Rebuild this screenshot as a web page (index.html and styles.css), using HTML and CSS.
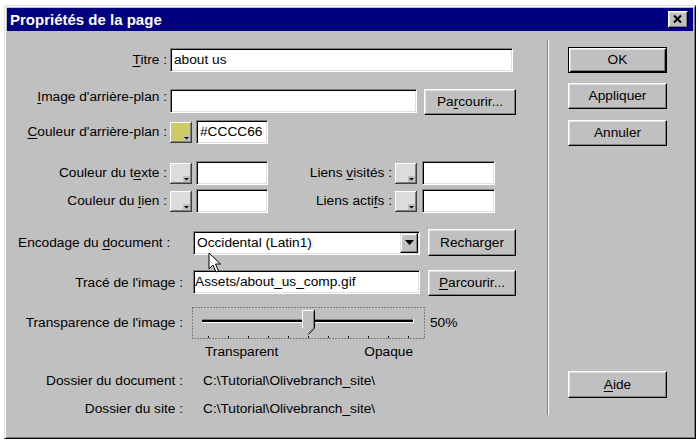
FILE: index.html
```html
<!DOCTYPE html>
<html lang="fr">
<head>
    <meta charset="UTF-8">
    <title>Propriétés de la page</title>
    <link rel="stylesheet" href="styles.css">
</head>
<body>
    <div class="window">
        <div class="titlebar">
            <span class="title">Propriétés de la page</span>
            <span class="close">
                <svg width="18" height="15" viewBox="0 0 18 15">
                    <path d="M5 3.5 L12 10.5 M12 3.5 L5 10.5" stroke="#000" stroke-width="2"/>
                </svg>
            </span>
        </div>
        <div class="dialog-body">
            <div class="form">
                <div class="row row-titre">
                    <span class="lbl lbl-a"><u>T</u>itre :</span>
                    <div class="field w-titre">about us</div>
                </div>
                <div class="row row-image">
                    <span class="lbl lbl-a"><u>I</u>mage d'arrière-plan :</span>
                    <div class="field w-image"></div>
                    <div class="btn btn-browse">Pa<u>r</u>courir...</div>
                </div>
                <div class="row row-bg">
                    <span class="lbl lbl-a"><u>C</u>ouleur d'arrière-plan :</span>
                    <svg class="swatch" width="22" height="21" viewBox="0 0 22 21">
                        <rect width="22" height="21" fill="#fff"/>
                        <rect x="21" width="1" height="21" fill="#404040"/>
                        <rect y="20" width="22" height="1" fill="#404040"/>
                        <rect x="1" y="1" width="19" height="18" fill="#cccc66"/>
                        <rect x="20" y="1" width="1" height="19" fill="#808080"/>
                        <rect x="1" y="19" width="20" height="1" fill="#808080"/>
                        <rect x="13" y="13" width="7" height="6" fill="#c0c0c0"/>
                        <path d="M14 15 H19 L16.5 17.5 Z" fill="#000"/>
                    </svg>
                    <div class="field w-color">#CCCC66</div>
                </div>
                <div class="row row-texte">
                    <span class="lbl lbl-a">Couleur du t<u>e</u>xte :</span>
                    <svg class="swatch" width="22" height="21" viewBox="0 0 22 21">
                        <rect width="22" height="21" fill="#fff"/>
                        <rect x="21" width="1" height="21" fill="#404040"/>
                        <rect y="20" width="22" height="1" fill="#404040"/>
                        <rect x="1" y="1" width="19" height="18" fill="#dcdcdc"/>
                        <rect x="20" y="1" width="1" height="19" fill="#808080"/>
                        <rect x="1" y="19" width="20" height="1" fill="#808080"/>
                        <rect x="13" y="13" width="7" height="6" fill="#c0c0c0"/>
                        <path d="M14 15 H19 L16.5 17.5 Z" fill="#000"/>
                    </svg>
                    <div class="field w-color"></div>
                    <span class="lbl lbl-c">Liens <u>v</u>isités :</span>
                    <svg class="swatch" width="22" height="21" viewBox="0 0 22 21">
                        <rect width="22" height="21" fill="#fff"/>
                        <rect x="21" width="1" height="21" fill="#404040"/>
                        <rect y="20" width="22" height="1" fill="#404040"/>
                        <rect x="1" y="1" width="19" height="18" fill="#dcdcdc"/>
                        <rect x="20" y="1" width="1" height="19" fill="#808080"/>
                        <rect x="1" y="19" width="20" height="1" fill="#808080"/>
                        <rect x="13" y="13" width="7" height="6" fill="#c0c0c0"/>
                        <path d="M14 15 H19 L16.5 17.5 Z" fill="#000"/>
                    </svg>
                    <div class="field w-color2"></div>
                </div>
                <div class="row row-lien">
                    <span class="lbl lbl-a">Couleur du <u>l</u>ien :</span>
                    <svg class="swatch" width="22" height="21" viewBox="0 0 22 21">
                        <rect width="22" height="21" fill="#fff"/>
                        <rect x="21" width="1" height="21" fill="#404040"/>
                        <rect y="20" width="22" height="1" fill="#404040"/>
                        <rect x="1" y="1" width="19" height="18" fill="#dcdcdc"/>
                        <rect x="20" y="1" width="1" height="19" fill="#808080"/>
                        <rect x="1" y="19" width="20" height="1" fill="#808080"/>
                        <rect x="13" y="13" width="7" height="6" fill="#c0c0c0"/>
                        <path d="M14 15 H19 L16.5 17.5 Z" fill="#000"/>
                    </svg>
                    <div class="field w-color"></div>
                    <span class="lbl lbl-c">Liens acti<u>f</u>s :</span>
                    <svg class="swatch" width="22" height="21" viewBox="0 0 22 21">
                        <rect width="22" height="21" fill="#fff"/>
                        <rect x="21" width="1" height="21" fill="#404040"/>
                        <rect y="20" width="22" height="1" fill="#404040"/>
                        <rect x="1" y="1" width="19" height="18" fill="#dcdcdc"/>
                        <rect x="20" y="1" width="1" height="19" fill="#808080"/>
                        <rect x="1" y="19" width="20" height="1" fill="#808080"/>
                        <rect x="13" y="13" width="7" height="6" fill="#c0c0c0"/>
                        <path d="M14 15 H19 L16.5 17.5 Z" fill="#000"/>
                    </svg>
                    <div class="field w-color2"></div>
                </div>
                <div class="row row-enc">
                    <span class="lbl lbl-enc">Encodage du <u>d</u>ocument :</span>
                    <div class="field select">
                        <span class="select-text">Occidental (Latin1)</span>
                        <span class="drop">
                            <svg width="9" height="5" viewBox="0 0 9 5"><path d="M0 0 H9 L4.5 5 Z" fill="#000"/></svg>
                        </span>
                    </div>
                    <div class="btn btn-side">Recharger</div>
                </div>
                <div class="row row-trace">
                    <span class="lbl lbl-b">Tracé de l'image :</span>
                    <div class="field w-trace">Assets/about_us_comp.gif</div>
                    <div class="btn btn-side"><u>P</u>arcourir...</div>
                </div>
                <div class="row row-slider">
                    <span class="lbl lbl-b">Transparence de l'image :</span>
                    <svg class="slider" width="233" height="32" viewBox="0 0 233 32">
                        <rect x="0.5" y="0.5" width="232" height="31" fill="none" stroke="#404040" stroke-dasharray="1 2"/>
                        <rect x="10" y="12" width="211" height="1" fill="#808080"/>
                        <rect x="10" y="13" width="211" height="2" fill="#000"/>
                        <rect x="10" y="15" width="212" height="1" fill="#fff"/>
                        <rect x="221" y="12" width="1" height="4" fill="#fff"/>
                        <path d="M110 3 H122 V21 L116 27 L110 21 Z" fill="#c0c0c0"/>
                        <path d="M110.5 21 V3.5 H121.5" fill="none" stroke="#fff"/>
                        <path d="M122.5 3 V21.2 L116.3 27.5" fill="none" stroke="#000"/>
                        <path d="M121.5 4 V20.8 L116 26.3" fill="none" stroke="#808080"/>
                        <g fill="#000">
                            <rect x="16" y="29" width="1" height="2"/>
                            <rect x="36" y="29" width="1" height="2"/>
                            <rect x="56" y="29" width="1" height="2"/>
                            <rect x="76" y="29" width="1" height="2"/>
                            <rect x="96" y="29" width="1" height="2"/>
                            <rect x="116" y="29" width="1" height="2"/>
                            <rect x="136" y="29" width="1" height="2"/>
                            <rect x="156" y="29" width="1" height="2"/>
                            <rect x="176" y="29" width="1" height="2"/>
                            <rect x="196" y="29" width="1" height="2"/>
                            <rect x="216" y="29" width="1" height="2"/>
                        </g>
                    </svg>
                    <span class="percent">50%</span>
                </div>
                <div class="row row-ends">
                    <span>Transparent</span>
                    <span>Opaque</span>
                </div>
                <div class="row row-doc">
                    <span class="lbl lbl-b">Dossier du document :</span>
                    <span class="path">C:\Tutorial\Olivebranch_site\</span>
                </div>
                <div class="row row-site">
                    <span class="lbl lbl-b">Dossier du site :</span>
                    <span class="path">C:\Tutorial\Olivebranch_site\</span>
                </div>
            </div>
            <div class="divider"></div>
            <div class="buttons">
                <div class="btn btn-main btn-default">OK</div>
                <div class="btn btn-main btn-apply">Appliquer</div>
                <div class="btn btn-main btn-cancel">Annuler</div>
                <div class="btn btn-main btn-help"><u>A</u>ide</div>
            </div>
        </div>
        <!-- mouse pointer over the encoding list -->
        <svg class="cursor" width="14" height="22" viewBox="0 0 14 22">
            <path d="M1 1 V17 L5 13 L8 20 L10.5 19 L7.5 12 H12.5 Z" fill="#fff" stroke="#000" stroke-width="1" stroke-linejoin="miter"/>
        </svg>
    </div>
</body>
</html>
```

FILE: styles.css
```css
body {
    margin: 0;
    background: #fff;
    font-family: "Liberation Sans", Arial, sans-serif;
    font-size: 13.7px;
    line-height: 16px;
    color: #000;
}

u {
    text-underline-offset: 2px;
}

.window {
    position: relative;
    margin: 5px 0 0 4px;
    width: 692px;
    height: 434px;
    box-sizing: border-box;
    background: #c0c0c0;
    border: 1px solid;
    border-color: #dfdfdf #000 #000 #dfdfdf;
    box-shadow: inset 1px 1px #fff, inset -1px -1px #808080;
    padding: 2px;
}

.titlebar {
    height: 23px;
    background: #000080;
    color: #fff;
    display: flex;
    align-items: center;
    justify-content: space-between;
    padding: 0 5px 0 3px;
}

.title {
    font-weight: bold;
    font-size: 15px;
}

.close {
    width: 20px;
    height: 17px;
    box-sizing: border-box;
    background: #c0c0c0;
    border: 1px solid;
    border-color: #fff #000 #000 #fff;
    box-shadow: inset -1px -1px #808080, inset 1px 1px #dfdfdf;
    display: flex;
    align-items: center;
    justify-content: center;
}

.dialog-body {
    display: flex;
    height: 405px;
}

.form {
    width: 540px;
}

.row {
    display: flex;
    align-items: center;
}

.lbl {
    flex: none;
    text-align: right;
    white-space: nowrap;
}

.lbl-a {
    width: 160px;
    margin-right: 3px;
}

.lbl-b {
    width: 176px;
}

.lbl-c {
    width: 124px;
    margin-right: 3px;
}

.lbl-enc {
    width: 175px;
    padding-left: 11px;
    box-sizing: border-box;
    text-align: left;
}

/* sunken white edit box */
.field {
    flex: none;
    box-sizing: border-box;
    height: 24px;
    background: #fff;
    border: 1px solid;
    border-color: #808080 #fff #fff #808080;
    box-shadow: inset 1px 1px #000, inset -1px -1px #dfdfdf;
    padding: 0 3px;
    display: flex;
    align-items: center;
    white-space: nowrap;
}

.w-titre { width: 343px; }
.w-image { width: 247px; }
.w-color { width: 72px; margin-left: 4px; }
.w-color2 { width: 73px; margin-left: 5px; }
.w-trace { width: 227px; margin-left: 10px; padding-left: 1px; }

.swatch {
    flex: none;
    display: block;
}

.btn {
    flex: none;
    box-sizing: border-box;
    background: #c0c0c0;
    border: 1px solid;
    border-color: #fff #000 #000 #fff;
    box-shadow: inset -1px -1px #808080, inset 1px 1px #dfdfdf;
    display: flex;
    align-items: center;
    justify-content: center;
    white-space: nowrap;
}

.btn-browse {
    width: 92px;
    height: 26px;
    margin-left: 7px;
}

.btn-side {
    width: 88px;
    margin-left: 8px;
}

.row-titre { margin-top: 17px; height: 24px; }
.row-image { margin-top: 17px; height: 26px; align-items: flex-start; }
.row-bg { margin-top: 5px; height: 24px; }
.row-texte { margin-top: 17px; height: 24px; }
.row-lien { margin-top: 4px; height: 24px; }
.row-enc { margin-top: 16px; height: 27px; }
.row-enc .btn-side { height: 27px; }
.row-trace { margin-top: 14px; height: 26px; align-items: flex-start; }
.row-trace .lbl { align-self: center; }
.row-trace .btn-side { height: 26px; }
.row-slider { margin-top: 11px; height: 32px; }
.row-ends {
    margin-top: 5px;
    height: 16px;
    margin-left: 198px;
    width: 208px;
    justify-content: space-between;
}
.row-doc { margin-top: 13px; height: 16px; }
.row-site { margin-top: 12px; height: 16px; }

.select {
    width: 227px;
    margin-left: 11px;
    padding: 0 2px 0 3px;
    justify-content: space-between;
}

.drop {
    width: 18px;
    height: 20px;
    box-sizing: border-box;
    background: #c0c0c0;
    border: 1px solid;
    border-color: #dfdfdf #000 #000 #dfdfdf;
    box-shadow: inset -1px -1px #808080, inset 1px 1px #fff;
    display: flex;
    align-items: center;
    justify-content: center;
    margin-right: -1px;
}

.drop svg {
    display: block;
}

.slider {
    flex: none;
    display: block;
    margin-left: 9px;
}

.percent {
    margin-left: 5px;
}

.path {
    margin-left: 20px;
    white-space: nowrap;
}

.divider {
    flex: none;
    width: 0;
    height: 375px;
    margin-top: 9px;
    border-left: 1px solid #808080;
    border-right: 1px solid #fff;
}

.buttons {
    display: flex;
    flex-direction: column;
    padding: 16px 0 0 19px;
}

.btn-main {
    width: 99px;
    height: 26px;
}

.btn-default {
    border-color: #000;
    box-shadow: inset 1px 1px #fff, inset -1px -1px #000, inset 2px 2px #dfdfdf, inset -2px -2px #808080;
}

.btn-apply { margin-top: 10px; }
.btn-cancel { margin-top: 11px; }
.btn-help { margin-top: 225px; height: 27px; }

.cursor {
    position: absolute;
    left: 203px;
    top: 246px;
}
```
